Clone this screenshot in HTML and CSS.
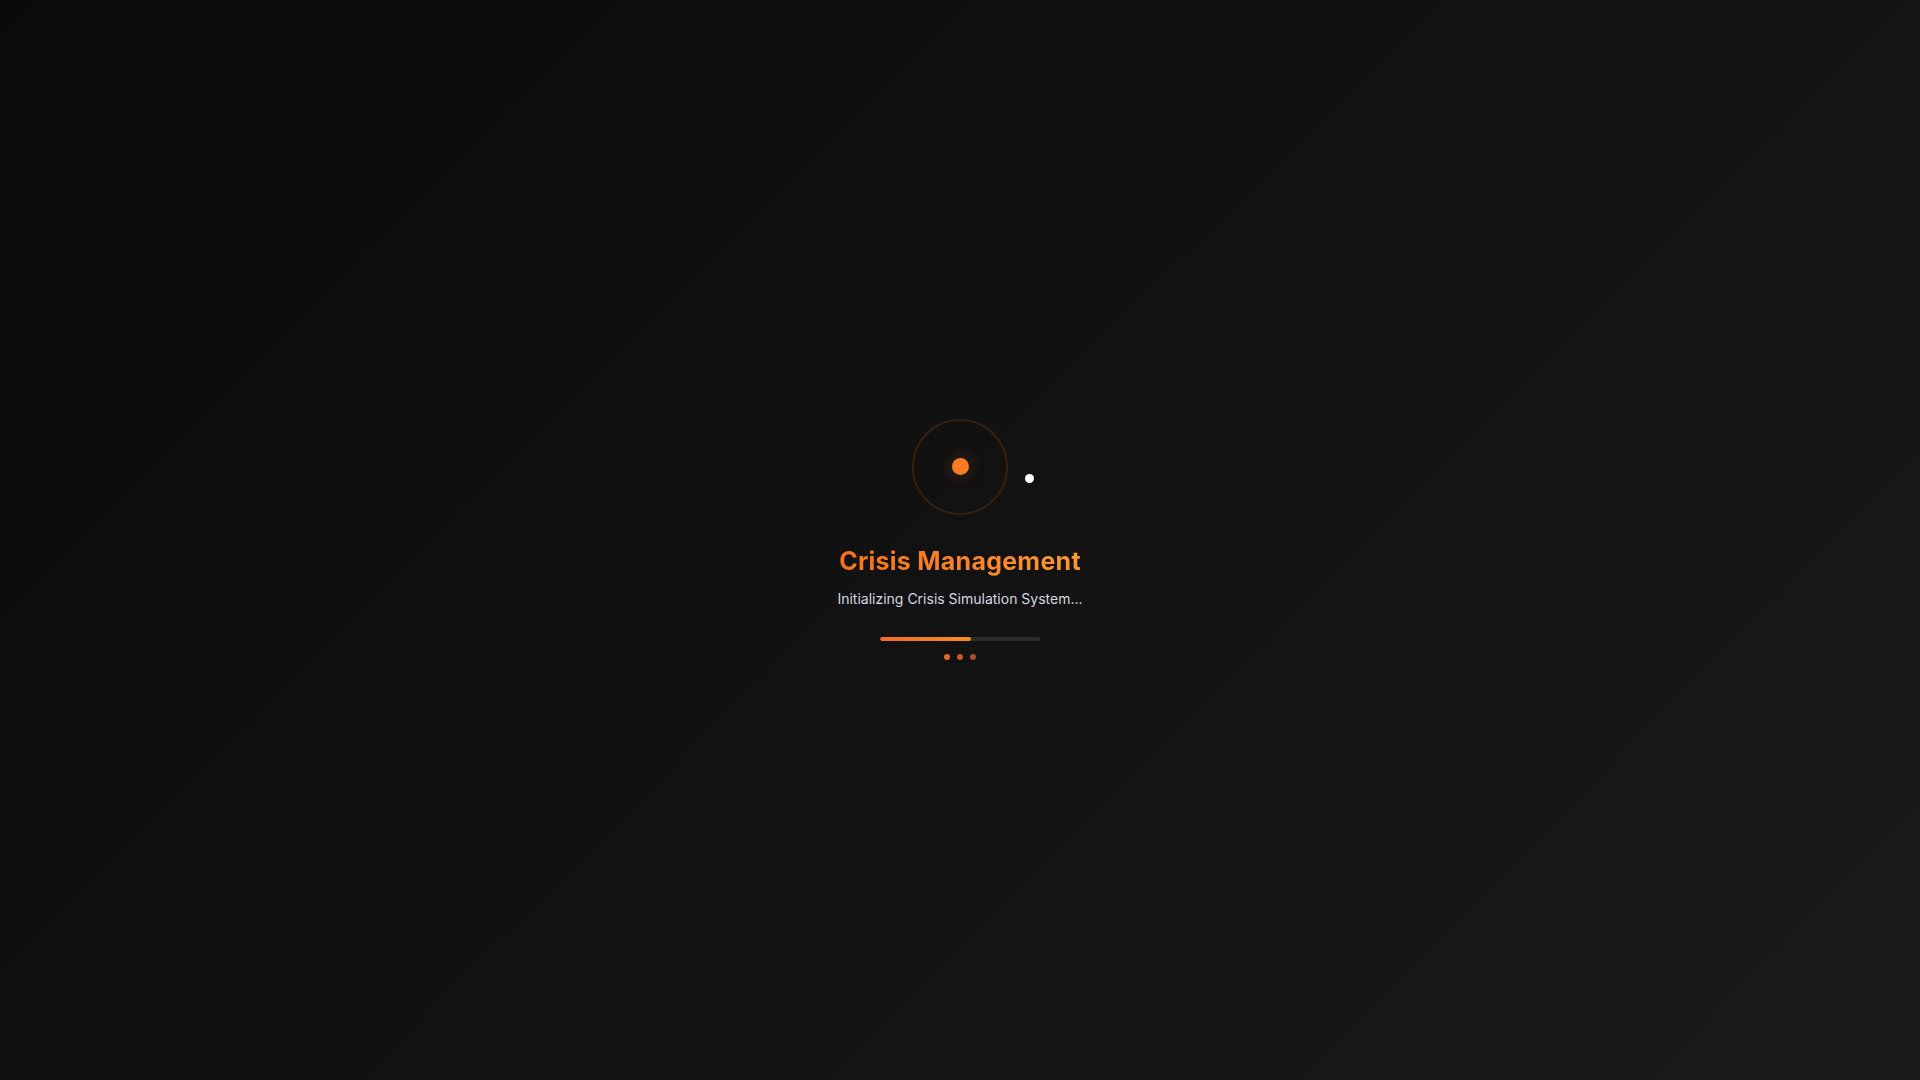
FILE: index.html
```html
<!DOCTYPE html>
<html lang="en">
<head>
<meta charset="utf-8">
<title>Crisis Management</title>
<link rel="stylesheet" href="styles.css">
</head>
<body>
<main class="screen">
  <div class="loader">
    <div class="orbit">
      <div class="ring"></div>
      <div class="core"></div>
      <div class="satellite"></div>
    </div>
    <h1 class="title">Crisis Management</h1>
    <p class="subtitle">Initializing Crisis Simulation System...</p>
    <div class="progress"><div class="progress-fill" style="width:57%"></div></div>
    <div class="dots">
      <span class="dot dot-1"></span>
      <span class="dot dot-2"></span>
      <span class="dot dot-3"></span>
    </div>
  </div>
</main>
</body>
</html>
```
FILE: styles.css
```css
* { box-sizing: border-box; }
html, body { margin: 0; padding: 0; height: 100%; }
body {
  font-family: Inter, "Noto Sans", "Liberation Sans", sans-serif;
  background: linear-gradient(135deg, #0a0a0a 0%, #121212 50%, #1a1a1a 100%);
  color: #cbd5e1;
}
.screen {
  width: 1920px;
  height: 1080px;
  display: flex;
  align-items: center;
  justify-content: center;
}
.loader {
  display: flex;
  flex-direction: column;
  align-items: center;
  margin-top: -2px;
}
.orbit {
  position: relative;
  width: 96px;
  height: 96px;
  display: flex;
  align-items: center;
  justify-content: center;
}
.ring {
  position: absolute;
  inset: 0;
  border-radius: 50%;
  border: 2px solid rgba(249, 115, 22, 0.16);
}
.core {
  width: 17px;
  height: 17px;
  border-radius: 50%;
  background: #f97b22;
  box-shadow: 0 0 14px 4px rgba(249, 115, 22, 0.12);
}
.satellite {
  position: absolute;
  left: 113px;
  top: 55px;
  width: 9px;
  height: 9px;
  border-radius: 50%;
  background: #ffffff;
}
.title {
  margin: 30px 0 0;
  font-size: 25px;
  line-height: 32px;
  font-weight: 700;
  letter-spacing: 0.25px;
  background: linear-gradient(90deg, #f97316 0%, #fb8a2c 70%, #fb9a2e 100%);
  -webkit-background-clip: text;
  background-clip: text;
  color: transparent;
}
.subtitle {
  margin: 12px 0 0;
  font-size: 14px;
  line-height: 20px;
  color: #d2d8e0;
}
.progress {
  margin-top: 28px;
  width: 160px;
  height: 4px;
  border-radius: 2px;
  background: #2c2c2c;
  overflow: hidden;
}
.progress-fill {
  height: 100%;
  border-radius: 2px;
  background: linear-gradient(90deg, #f26a26 0%, #f7901e 100%);
}
.dots {
  margin-top: 13px;
  display: flex;
  gap: 7px;
}
.dot {
  width: 6px;
  height: 6px;
  border-radius: 50%;
  background: #f06a2a;
}
.dot-1 { opacity: 0.95; }
.dot-2 { opacity: 0.8; }
.dot-3 { opacity: 0.7; }
```
